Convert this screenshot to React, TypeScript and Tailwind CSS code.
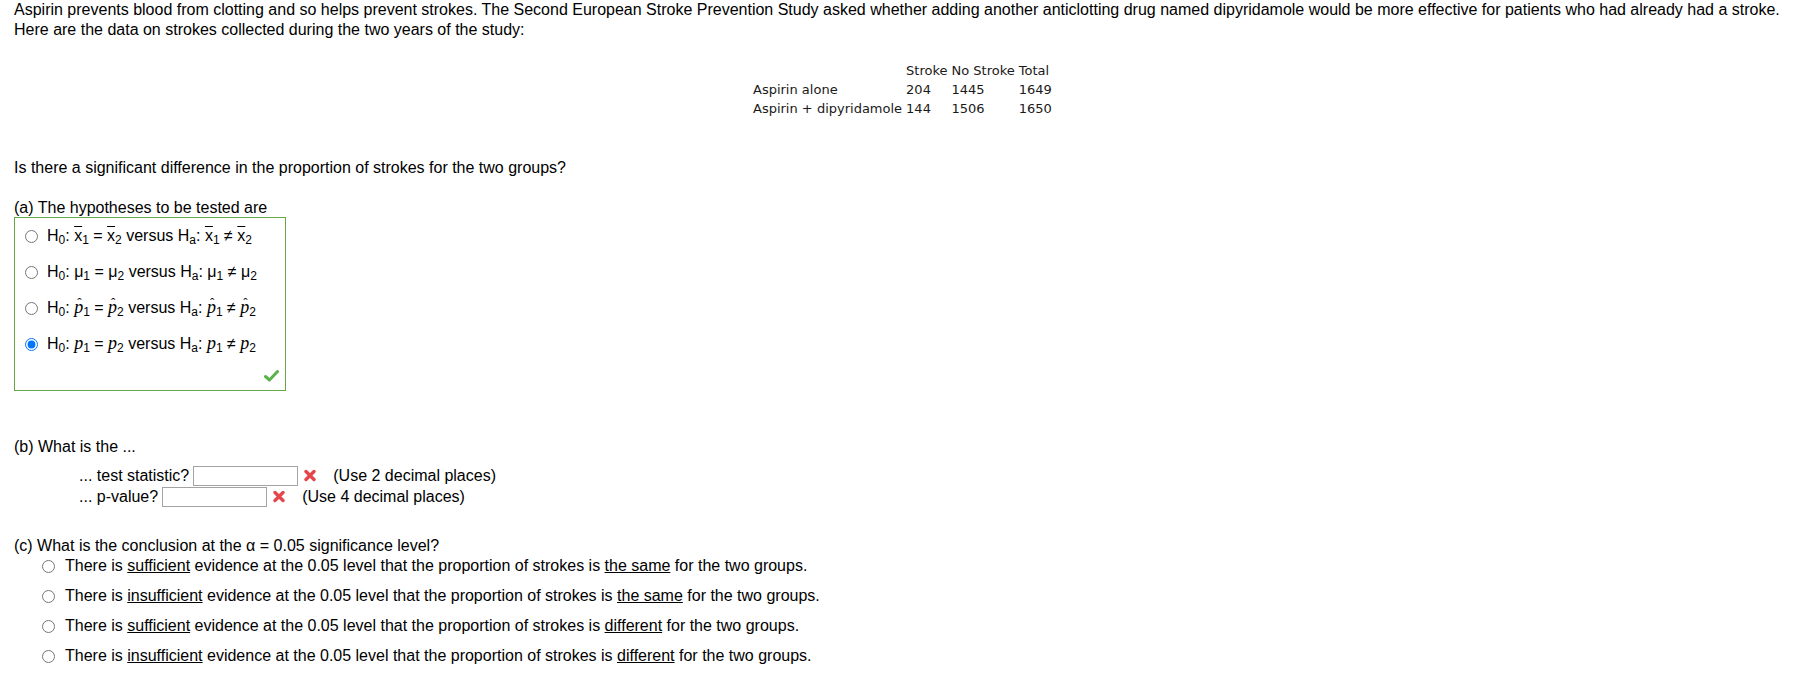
import React from "react";

const XBar = ({ n }: { n: string }) => (
  <>
    <span className="overline">x</span>
    <sub>{n}</sub>
  </>
);

const Mu = ({ n }: { n: string }) => (
  <>
    <span>μ</span>
    <sub>{n}</sub>
  </>
);

const P = ({ n, hat }: { n: string; hat?: boolean }) => (
  <>
    <span className="relative inline-block font-['Liberation_Serif',serif] italic text-[18px] leading-none">
      p
      {hat && (
        <span className="absolute left-[3px] top-[-2px] not-italic text-[13px] leading-none">ˆ</span>
      )}
    </span>
    <sub>{n}</sub>
  </>
);

const Hyp = ({ children }: { children: React.ReactNode }) => (
  <span className="whitespace-nowrap">
    H<sub>0</sub>: {children}
  </span>
);

const RedX = () => (
  <svg width="12" height="13" viewBox="0 0 12 13" className="shrink-0">
    <path d="M2 2.5 L10 10.5 M10 2.5 L2 10.5" stroke="#e3474b" strokeWidth="3.4" strokeLinecap="round" />
  </svg>
);

const Check = () => (
  <svg width="15" height="12" viewBox="0 0 15 12">
    <path d="M1.5 6.5 L5.5 10 L13.5 1.5" fill="none" stroke="#5cb24a" strokeWidth="3" strokeLinecap="round" strokeLinejoin="round" />
  </svg>
);

const hypotheses = [
  { id: "h1", checked: false, body: <><XBar n="1" /> = <XBar n="2" /> versus H<sub>a</sub>: <XBar n="1" /> ≠ <XBar n="2" /></> },
  { id: "h2", checked: false, body: <><Mu n="1" /> = <Mu n="2" /> versus H<sub>a</sub>: <Mu n="1" /> ≠ <Mu n="2" /></> },
  { id: "h3", checked: false, body: <><P n="1" hat /> = <P n="2" hat /> versus H<sub>a</sub>: <P n="1" hat /> ≠ <P n="2" hat /></> },
  { id: "h4", checked: true, body: <><P n="1" /> = <P n="2" /> versus H<sub>a</sub>: <P n="1" /> ≠ <P n="2" /></> },
];

const conclusions = [
  ["sufficient", "the same"],
  ["insufficient", "the same"],
  ["sufficient", "different"],
  ["insufficient", "different"],
];

const rows = [
  ["Aspirin alone", "204", "1445", "1649"],
  ["Aspirin + dipyridamole", "144", "1506", "1650"],
];

export default function App() {
  return (
    <div className="min-h-screen bg-white px-[14px] font-['Liberation_Sans',Arial,sans-serif] text-[16px] leading-[20px] text-black">
      <p>
        <span className="whitespace-nowrap">
          Aspirin prevents blood from clotting and so helps prevent strokes. The Second European Stroke Prevention Study asked whether adding another anticlotting drug named dipyridamole would be more effective for patients who had already had a stroke.
        </span>
        <br />
        Here are the data on strokes collected during the two years of the study:
      </p>

      {/* data table */}
      <table className="mt-[20px] ml-[736px] border-separate border-spacing-[2px] font-['DejaVu_Sans',Verdana,sans-serif] text-[13px] leading-[15px] text-[#1a1a1a]">
        <tbody>
          <tr>
            <td className="p-px"></td>
            <td className="p-px">Stroke</td>
            <td className="p-px">No Stroke</td>
            <td className="p-px">Total</td>
          </tr>
          {rows.map((r) => (
            <tr key={r[0]}>
              {r.map((c, i) => (
                <td key={i} className="p-px whitespace-nowrap">{c}</td>
              ))}
            </tr>
          ))}
        </tbody>
      </table>

      <p className="mt-[39px]">Is there a significant difference in the proportion of strokes for the two groups?</p>

      {/* part a */}
      <p className="mt-[20px]">(a) The hypotheses to be tested are</p>
      <div className="mt-[-1px] w-[272px] border border-[#65a845]">
        {hypotheses.map((h) => (
          <label key={h.id} className="flex h-[36px] items-center pl-[10px]">
            <input type="radio" name="hyp" defaultChecked={h.checked} className="m-0 h-[13px] w-[13px] shrink-0" />
            <span className="ml-[9px]">
              <Hyp>{h.body}</Hyp>
            </span>
          </label>
        ))}
        <div className="flex h-[28px] items-center justify-end pr-[6px]">
          <Check />
        </div>
      </div>

      {/* part b */}
      <p className="mt-[46px]">(b) What is the ...</p>
      <div className="mt-[8px] ml-[65px]">
        <div className="flex h-[21px] items-center">
          <span className="mr-[4px]">... test statistic?</span>
          <input type="text" className="h-[20px] w-[105px] border border-[#a3a3a3] bg-white px-1 outline-none" />
          <span className="ml-[6px]"><RedX /></span>
          <span className="ml-[17px]">(Use 2 decimal places)</span>
        </div>
        <div className="flex h-[21px] items-center">
          <span className="mr-[4px]">... p-value?</span>
          <input type="text" className="h-[20px] w-[105px] border border-[#a3a3a3] bg-white px-1 outline-none" />
          <span className="ml-[6px]"><RedX /></span>
          <span className="ml-[17px]">(Use 4 decimal places)</span>
        </div>
      </div>

      {/* part c */}
      <p className="mt-[29px]">(c) What is the conclusion at the α = 0.05 significance level?</p>
      <div className="flex flex-col gap-[10px]">
        {conclusions.map(([a, b], i) => (
          <label key={i} className="flex h-[20px] items-center">
            <input type="radio" name="concl" className="m-0 ml-[28px] h-[13px] w-[13px] shrink-0" />
            <span className="ml-[10px] whitespace-nowrap">
              There is <u>{a}</u> evidence at the 0.05 level that the proportion of strokes is <u>{b}</u> for the two groups.
            </span>
          </label>
        ))}
      </div>
    </div>
  );
}
